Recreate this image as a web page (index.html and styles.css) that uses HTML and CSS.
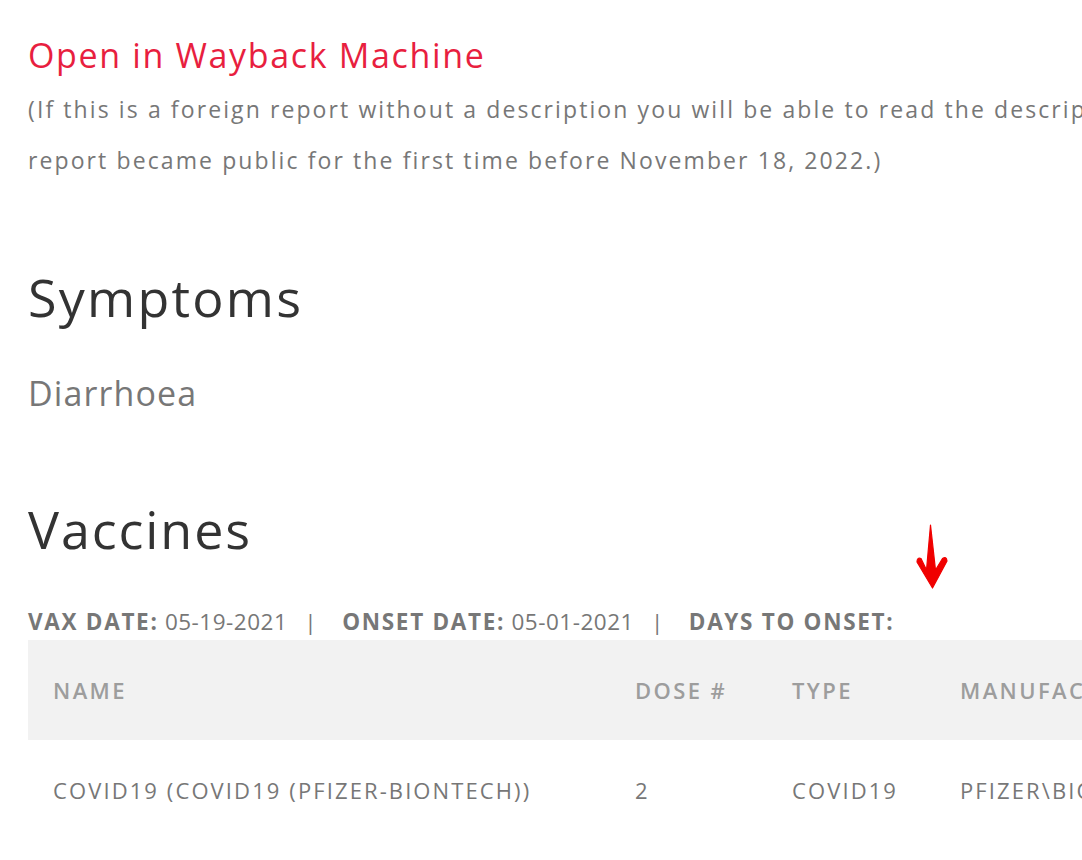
FILE: index.html
```html
<!DOCTYPE html>
<html lang="en">
<head>
<meta charset="utf-8">
<title>Report</title>
<link rel="stylesheet" href="styles.css">
</head>
<body>
<main class="page">
  <a class="wayback" href="#">Open in Wayback Machine</a>
  <p class="note">(If this is a foreign report without a description you will be able to read the description in the Wayback Machine if the report became public for the first time before November 18, 2022.)</p>

  <h2 class="section-title symptoms-title">Symptoms</h2>
  <p class="symptom">Diarrhoea</p>

  <h2 class="section-title vaccines-title">Vaccines</h2>
  <div class="dates">
    <span class="label">VAX DATE:</span> 05-19-2021<span class="sep">|</span><span class="label">ONSET DATE:</span> 05-01-2021<span class="sep">|</span><span class="label">DAYS TO ONSET:</span>
  </div>
  <svg class="arrow" viewBox="0 0 36 70" width="36" height="70" aria-hidden="true">
    <path d="M16.5 3 L21.5 48 L28.5 36.5 Q32.5 34 33 39 L18.5 66 L3 40 Q3 35 7 36.5 L12.5 48 Z" fill="#f00000" stroke="#f00000" stroke-width="1.2" stroke-linejoin="round"/>
  </svg>

  <table class="vax-table">
    <thead>
      <tr>
        <th class="col-name">NAME</th>
        <th class="col-dose">DOSE #</th>
        <th class="col-type">TYPE</th>
        <th class="col-manu">MANUFACTURER</th>
        <th class="col-lot">LOT</th>
      </tr>
    </thead>
    <tbody>
      <tr>
        <td>COVID19 (COVID19 (PFIZER-BIONTECH))</td>
        <td>2</td>
        <td>COVID19</td>
        <td>PFIZER\BIONTECH</td>
        <td></td>
      </tr>
    </tbody>
  </table>
</main>
</body>
</html>
```

FILE: styles.css
```css
html, body {
  margin: 0;
  padding: 0;
  background: #ffffff;
}
body {
  overflow: hidden;
  font-family: "Open Sans", "Liberation Sans", sans-serif;
}
.page {
  position: relative;
  width: 1700px;
  padding: 30px 0 0 28px;
}
.wayback {
  display: block;
  color: #e81f3f;
  text-decoration: none;
  font-size: 34px;
  line-height: 50px;
  letter-spacing: 1.65px;
}
.note {
  margin: 3.5px 0 0;
  width: 1540px;
  color: #777777;
  font-size: 23px;
  line-height: 51px;
  letter-spacing: 2.1px;
}
.section-title {
  margin: 0;
  color: #333333;
  font-weight: 400;
  font-size: 52px;
  line-height: 60px;
}
.symptoms-title {
  margin-top: 81px;
  letter-spacing: 2.25px;
}
.symptom {
  margin: 41px 0 0;
  color: #777777;
  font-size: 34px;
  line-height: 50px;
  letter-spacing: 1.1px;
}
.vaccines-title {
  margin-top: 81px;
  letter-spacing: 1.9px;
}
.dates {
  margin-top: 48px;
  color: #777777;
  font-size: 22.5px;
  line-height: 30px;
  letter-spacing: 0.5px;
}
.label {
  font-weight: 700;
  letter-spacing: 1.7px;
}
.sep {
  margin: 0 25px 0 17px;
}
.arrow {
  position: absolute;
  left: 914px;
  top: 522px;
}
.vax-table {
  margin-top: 3px;
  border-collapse: collapse;
  width: 1407px;
  table-layout: fixed;
}
.vax-table th,
.vax-table td {
  box-sizing: border-box;
  text-align: left;
  padding: 0 0 0 25px;
  height: 100px;
  font-size: 22px;
}
.vax-table th {
  background: #f2f2f2;
  color: #9d9d9d;
  font-weight: 600;
  letter-spacing: 2.4px;
}
.vax-table td {
  color: #777777;
  font-weight: 400;
  letter-spacing: 2.1px;
}
.col-name { width: 582px; }
.col-dose { width: 157px; }
.col-type { width: 168px; }
.col-manu { width: 300px; }
.col-lot { width: 200px; }
```
